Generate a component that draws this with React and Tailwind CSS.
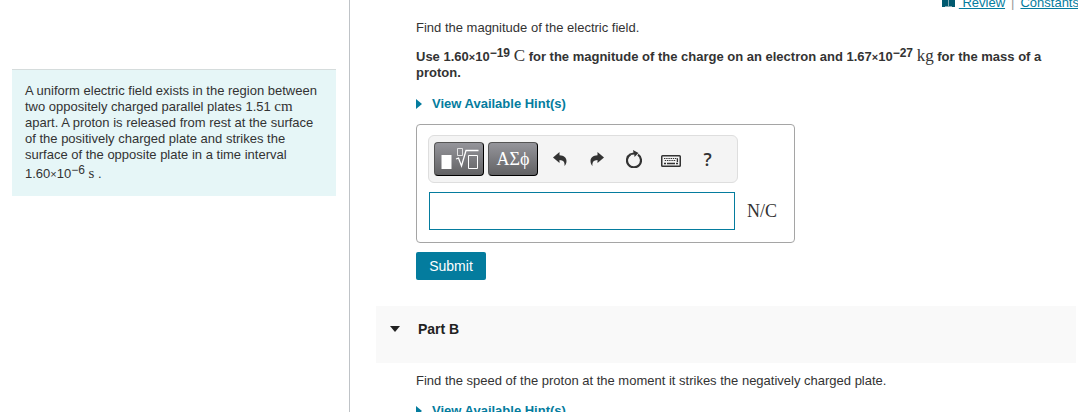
import React from "react";

function Unit({ children, className = "text-[15px]" }) {
  return (
    <span className={`font-['Liberation_Serif',serif] font-normal leading-none ${className}`}>{children}</span>
  );
}

function Power({ base, exp }) {
  return (
    <span className="whitespace-nowrap">
      {base}
      <span className="text-[11px]">×</span>10
      <sup className="relative -top-1 align-baseline text-xs leading-none">{exp}</sup>
    </span>
  );
}

function HintLink() {
  return (
    <button type="button" className="flex items-center gap-2.5 text-[13px] leading-4 font-bold text-[#047c9e]">
      <svg className="h-2.5 w-1.5" viewBox="0 0 6 10" fill="currentColor" aria-hidden="true">
        <path d="M0 0L6 5L0 10Z" />
      </svg>
      View Available Hint(s)
    </button>
  );
}

function ToolIcon({ label, children }) {
  return (
    <button type="button" aria-label={label} className="flex h-8 w-[37px] items-center justify-center text-[#333]">
      {children}
    </button>
  );
}

const darkButton =
  "flex h-[34px] w-[50px] items-center justify-center rounded-sm border border-[#555] border-r-black border-b-black bg-linear-to-b from-[#95959b] to-[#626264] text-white";

function AnswerBox() {
  return (
    <div className="w-[379px] max-w-full rounded border border-[#a5a5a5] px-[11px] pt-2.5 pb-3">
      <div className="flex h-12 w-[310px] items-center rounded-md border border-[#dedede] bg-[#f4f4f4] pl-[5px]">
        <button type="button" aria-label="Templates" className={darkButton}>
          <svg className="h-7 w-10" viewBox="0 0 40 28" fill="none" stroke="currentColor" aria-hidden="true">
            <path d="M2.5 10H12.5V24H2.5Z" fill="currentColor" stroke="none" />
            <path d="M18.5 3.5H23.5V10.5H18.5Z" strokeWidth="1" opacity=".75" />
            <path d="M17 14L19.5 13L22.5 21L27 5.5H39.5" strokeWidth="1.3" />
            <path d="M29.5 10.5H38.5V23.5H29.5Z" strokeWidth="1" />
          </svg>
        </button>
        <button
          type="button"
          aria-label="Symbols ΑΣϕ"
          className={`${darkButton} ml-1 font-['Liberation_Serif',serif] text-lg leading-5`}
        >
          ΑΣϕ
        </button>
        <div className="ml-[3px] flex items-center">
          <ToolIcon label="undo">
            <svg className="h-4 w-3.5" viewBox="0 0 14 16" fill="currentColor" aria-hidden="true">
              <path d="M0 6.5L6.5 1V4.2C11 4.4 13.5 6.7 13.5 10C13.5 12 12.8 13.6 11.5 15C12 11.3 10.5 9.2 6.5 9.1V12Z" />
            </svg>
          </ToolIcon>
          <ToolIcon label="redo">
            <svg className="h-4 w-3.5" viewBox="0 0 14 16" fill="currentColor" aria-hidden="true">
              <path d="M14 6.5L7.5 1V4.2C3 4.4 .5 6.7 .5 10C.5 12 1.2 13.6 2.5 15C2 11.3 3.5 9.2 7.5 9.1V12Z" />
            </svg>
          </ToolIcon>
          <ToolIcon label="reset">
            <svg className="h-[18px] w-4" viewBox="0 0 16 18" aria-hidden="true">
              <path d="M4.6 4.2A7 7 0 1 0 12 4.6" fill="none" stroke="currentColor" strokeWidth="2.2" />
              <path d="M7 0L12.5 3L8.5 7L8.3 4.5L4.5 5L4 3.4L7.5 2.5Z" fill="currentColor" />
            </svg>
          </ToolIcon>
          <ToolIcon label="keyboard shortcuts">
            <svg className="mt-1 h-3 w-5" viewBox="0 0 20 12" aria-hidden="true">
              <rect x=".75" y=".75" width="18.5" height="10.5" rx=".8" fill="none" stroke="currentColor" strokeWidth="1.5" />
              <path d="M3 3.5H17M3.8 5.5H15" stroke="currentColor" strokeWidth="1.2" strokeDasharray="1.4 .8" />
              <path d="M3 8.5H5M6 8.5H14M15 8.5H17M16.4 4V7" stroke="currentColor" strokeWidth="1.3" />
            </svg>
          </ToolIcon>
          <ToolIcon label="help">
            <span className="font-['Open_Sans',sans-serif] text-lg leading-5 font-semibold">?</span>
          </ToolIcon>
        </div>
      </div>
      <div className="mt-[9px] ml-px flex items-center gap-3">
        <input
          type="text"
          aria-label="Electric field in N/C"
          className="h-[38px] w-[306px] border border-[#047c9e] bg-white px-2 text-base outline-none"
        />
        <Unit className="text-lg">N/C</Unit>
      </div>
    </div>
  );
}

export default function App() {
  return (
    <div className="flex h-screen overflow-hidden bg-white font-['Liberation_Sans',Arial,sans-serif] text-[13px] leading-4 text-[#333]">
      <aside className="w-[350px] shrink-0 border-r border-[#bfc3c7] pt-[69px] pr-[13px] pl-3">
        <section className="border-t border-[#d5dcdc] bg-[#e6f6f7] px-[13px] pt-[13px] pb-3.5 text-[#333]">
          <p>
            A uniform electric field exists in the region between two oppositely charged parallel plates 1.51{" "}
            <Unit>cm</Unit> apart. A proton is released from rest at the surface of the positively charged plate and
            strikes the surface of the opposite plate in a time interval
          </p>
          <p className="pt-[3px]">
            <Power base="1.60" exp="−6" /> <Unit>s</Unit> .
          </p>
        </section>
      </aside>
      <main className="min-w-0 flex-1">
        <nav className="-mr-px flex h-[11px] items-end justify-end text-[#047c9e]">
          <svg className="mb-1 h-3 w-[13px] shrink-0" viewBox="0 0 13 12" aria-hidden="true">
            <path d="M0 0H13V12H0Z" fill="#005a70" />
            <path d="M6.5 0V12M3 11.5H6M7 11.5H10" stroke="#87aeb7" strokeWidth="1" />
          </svg>
          <a href="#review" className="ml-1 whitespace-pre underline underline-offset-1">
            {" Review"}
          </a>
          <span className="mx-1.5 text-[#999]">|</span>
          <a href="#constants" className="underline underline-offset-1">
            Constants
          </a>
        </nav>
        <section className="pt-[9px] pr-8 pl-[66px]">
          <p>Find the magnitude of the electric field.</p>
          <p className="mt-[11px] font-bold">
            Use <Power base="1.60" exp="−19" /> <Unit className="text-[17px]">C</Unit> for the magnitude of the charge
            on an electron and <Power base="1.67" exp="−27" /> <Unit className="text-[17px]">kg</Unit> for the mass of a
            proton.
          </p>
          <div className="mt-[15px]">
            <HintLink />
          </div>
          <div className="mt-3">
            <AnswerBox />
          </div>
          <button
            type="button"
            className="mt-[9px] h-7 w-[70px] rounded-xs bg-[#047c9e] text-sm leading-5 text-white"
          >
            Submit
          </button>
        </section>
        <section className="mt-[26px]">
          <h2 className="mr-0.5 ml-[26px] h-[57px] bg-[#f9f9f9] pt-[15px] pl-3.5 text-sm leading-4 font-bold text-[#222]">
            <button type="button" className="flex items-center gap-[18px]">
              <svg className="h-1.5 w-2.5" viewBox="0 0 10 6" fill="currentColor" aria-hidden="true">
                <path d="M0 0H10L5 6Z" />
              </svg>
              Part B
            </button>
          </h2>
          <div className="pt-2.5 pl-[66px]">
            <p>Find the speed of the proton at the moment it strikes the negatively charged plate.</p>
            <div className="mt-3.5">
              <HintLink />
            </div>
          </div>
        </section>
      </main>
    </div>
  );
}
